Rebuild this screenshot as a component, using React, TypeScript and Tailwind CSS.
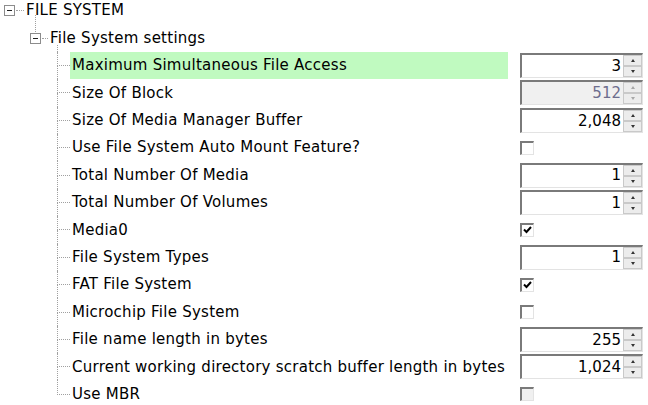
import React from 'react';

type Row = {
  label: string;
  kind: 'spin' | 'check';
  value?: string;
  checked?: boolean;
  disabled?: boolean;
  selected?: boolean;
};

const rows: Row[] = [
  { label: 'Maximum Simultaneous File Access', kind: 'spin', value: '3', selected: true },
  { label: 'Size Of Block', kind: 'spin', value: '512', disabled: true },
  { label: 'Size Of Media Manager Buffer', kind: 'spin', value: '2,048' },
  { label: 'Use File System Auto Mount Feature?', kind: 'check' },
  { label: 'Total Number Of Media', kind: 'spin', value: '1' },
  { label: 'Total Number Of Volumes', kind: 'spin', value: '1' },
  { label: 'Media0', kind: 'check', checked: true },
  { label: 'File System Types', kind: 'spin', value: '1' },
  { label: 'FAT File System', kind: 'check', checked: true },
  { label: 'Microchip File System', kind: 'check' },
  { label: 'File name length in bytes', kind: 'spin', value: '255' },
  { label: 'Current working directory scratch buffer length in bytes', kind: 'spin', value: '1,024' },
  { label: 'Use MBR', kind: 'check', disabled: true },
];

const MinusBox = () => (
  <div className="w-[11px] h-[11px] border border-[#8c8c8c] bg-white flex items-center justify-center shrink-0">
    <div className="w-[5px] h-px bg-[#202020]" />
  </div>
);

const Spinner = ({ value, disabled }: { value: string; disabled?: boolean }) => (
  <div className="flex h-[25px] w-[123px]">
    <div
      className={`flex-1 flex items-center justify-end pr-[2px] border-t-2 border-l-2 border-t-[#7a7a7a] border-l-[#7a7a7a] border-b border-b-[#e3e3e3] border-r-0 ${
        disabled ? 'bg-[#f0f0f0] text-[#6d6d8d]' : 'bg-white text-black'
      }`}
    >
      {value}
    </div>
    <div className="w-[20px] flex flex-col border-t-2 border-t-[#7a7a7a] border-b border-b-[#e3e3e3] border-r border-r-[#e3e3e3]">
      <div className="flex-1 flex items-center justify-center bg-[#ececec] border border-[#c9c9c9]">
        <div className={`w-0 h-0 border-l-[2.5px] border-r-[2.5px] border-b-[3px] border-l-transparent border-r-transparent ${disabled ? 'border-b-[#a8a8a8]' : 'border-b-[#333]'}`} />
      </div>
      <div className="flex-1 flex items-center justify-center bg-[#ececec] border border-[#c9c9c9]">
        <div className={`w-0 h-0 border-l-[2.5px] border-r-[2.5px] border-t-[3px] border-l-transparent border-r-transparent ${disabled ? 'border-t-[#a8a8a8]' : 'border-t-[#333]'}`} />
      </div>
    </div>
  </div>
);

const Check = ({ checked, disabled }: { checked?: boolean; disabled?: boolean }) => (
  <div
    className={`w-[14px] h-[14px] border-t-2 border-l-2 border-t-[#7a7a7a] border-l-[#7a7a7a] border-b border-r border-b-[#e3e3e3] border-r-[#e3e3e3] flex items-center justify-center ${
      disabled ? 'bg-[#f0f0f0]' : 'bg-white'
    }`}
  >
    {checked && (
      <svg width="9" height="8" viewBox="0 0 9 8">
        <path d="M1 3.5 L3.5 6 L8 1" stroke="#000" strokeWidth="2" fill="none" />
      </svg>
    )}
  </div>
);

export default function App() {
  return (
    <div className="w-[648px] h-[405px] bg-white overflow-hidden text-[15px] tracking-[0.25px] text-black font-['DejaVu_Sans',sans-serif]">
      <div className="-mt-[3px]">
        {/* level 0 */}
        <div className="flex items-center h-[27.4px] pl-[4px]">
          <MinusBox />
          <div className="w-[8px] border-t border-dotted border-[#a0a0a0] ml-px mr-[2px]" />
          <span>FILE SYSTEM</span>
        </div>
        {/* level 1 connectors */}
        <div className="flex h-[27.4px]">
          <div className="w-[35px] shrink-0" />
          <div className="-mt-[9px] h-[17px] border-l border-dotted border-[#a0a0a0]" />
          <div className="w-[21px] shrink-0" />
          <div className="self-end h-[7px] border-l border-dotted border-[#a0a0a0]" />
        </div>
        {/* level 1 */}
        <div className="flex items-center h-[27.4px] pl-[30px] -mt-[27.4px]">
          <MinusBox />
          <div className="w-[6px] border-t border-dotted border-[#a0a0a0] ml-px mr-[2px]" />
          <span>File System settings</span>
        </div>
        {/* children */}
        {rows.map((r, i) => {
          const last = i === rows.length - 1;
          return (
            <div key={r.label} className="flex h-[27.4px] items-stretch">
              <div className="w-[57px] shrink-0" />
              <div className="w-[13px] shrink-0 flex flex-col">
                <div className="flex-1 border-l border-dotted border-[#a0a0a0] border-b" />
                <div className={`flex-1 ${last ? '' : 'border-l border-dotted border-[#a0a0a0]'}`} />
              </div>
              <div
                className={`w-[438px] shrink-0 flex items-center pl-[2px] whitespace-nowrap ${
                  r.selected ? 'bg-[#c0fac0]' : ''
                }`}
              >
                {r.label}
              </div>
              <div className="w-[12px] shrink-0" />
              <div className="flex items-center tracking-normal">
                {r.kind === 'spin' ? (
                  <Spinner value={r.value!} disabled={r.disabled} />
                ) : (
                  <Check checked={r.checked} disabled={r.disabled} />
                )}
              </div>
            </div>
          );
        })}
      </div>
    </div>
  );
}
